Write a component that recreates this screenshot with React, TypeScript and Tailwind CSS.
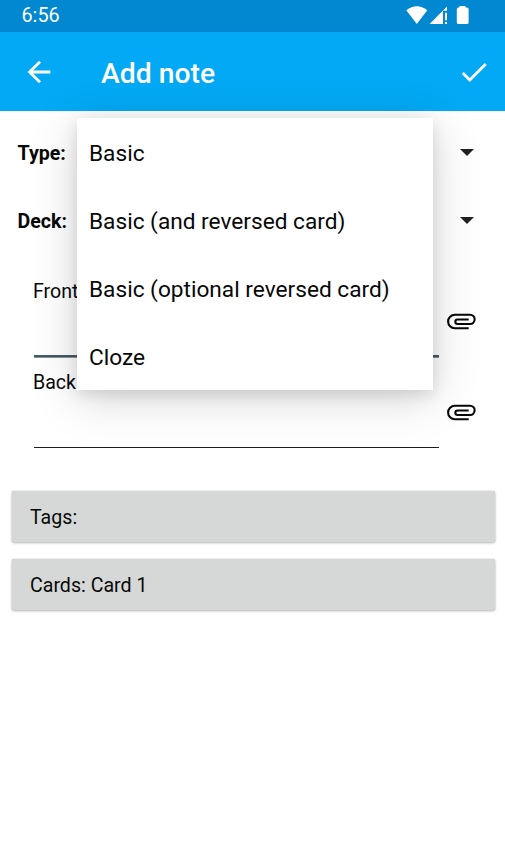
import React from "react";

const noteTypes = [
  "Basic",
  "Basic (and reversed card)",
  "Basic (optional reversed card)",
  "Cloze",
];

function StatusBar() {
  return (
    <div className="flex h-8 items-start justify-between bg-[#0288d1] pl-[21.5px] text-white">
      <span className="mt-[3.5px] text-[19.8px] leading-6">6:56</span>
      <svg className="h-8 w-[105px]" viewBox="400 0 105 32" fill="currentColor">
        <path d="M406.3 10.3Q416.8 2 427.3 10.3L416.8 23.9Z" />
        <path d="M429.6 24L447 6.4V10.8H443V24Z" />
        <path d="M445 12.7h2v7.6h-2zM445 22h2v2h-2z" />
        <path d="M459.4 6h6v1.6h1.600a1.600 1.600 0 0 1 1.600 1.600v13.200a1.600 1.600 0 0 1-1.600 1.600h-8.600a1.600 1.600 0 0 1-1.600-1.600V9.200a1.600 1.600 0 0 1 1.600-1.600h1z" />
      </svg>
    </div>
  );
}

function AppBar() {
  return (
    <header className="flex h-[79px] items-start bg-[#03a9f4] pl-[21.5px] pr-[14px] pt-[23px] text-white">
      <svg className="-mt-[0.5px] size-[34px]" viewBox="0 0 24 24" fill="currentColor">
        <path d="M20 11H7.830l5.590-5.590L12 4l-8 8 8 8 1.410-1.410L7.830 13H20v-2z" />
      </svg>
      <h1 className="ml-[45.500px] mt-px flex-1 text-[28.3px] font-medium leading-9">Add note</h1>
      <svg className="size-[34px]" viewBox="0 0 24 24" fill="currentColor">
        <path d="M9 16.170L4.830 12l-1.420 1.410L9 19 21 7l-1.410-1.410z" />
      </svg>
    </header>
  );
}

function Selector({ label }: { label: string }) {
  return (
    <div className="flex h-[68px] items-center justify-between pl-[17.5px] pr-[31px]">
      <span className="pt-[2px] text-[19.6px] font-bold">{label}</span>
      <svg className="mb-px h-[7px] w-[14px]" viewBox="0 0 14 7" fill="#212121">
        <path d="M0 0h14L7 7z" />
      </svg>
    </div>
  );
}

function Field({ label, focused }: { label: string; focused?: boolean }) {
  return (
    <div className="flex h-[91px] pl-[33px]">
      <div className="w-[406px]">
        <div className="text-[19.6px] leading-6">{label}</div>
        <div
          className={
            focused
              ? "ml-px mt-[51px] h-[3px] border-b border-[#84939a] bg-[#455a64]"
              : "ml-px mt-[52px] h-px bg-[#1c1c1c]"
          }
        />
      </div>
      <svg
        className="ml-[5px] mt-[24px] size-[34px]"
        viewBox="0 0 34 34"
        fill="none"
        stroke="currentColor"
        strokeWidth="2.1"
      >
        <path d="M24.700 24.300H10.900a6.800 6.800 0 0 1 0-13.600H26a4.650 4.650 0 0 1 0 9.300H13.600a2.250 2.250 0 0 1 0-4.500H24.700" />
      </svg>
    </div>
  );
}

function PanelButton({ children }: { children: React.ReactNode }) {
  return (
    <button className="flex h-[51px] items-center rounded-[2px] bg-[#d6d8d7] pl-[18px] pt-[2px] text-[19.6px] shadow-[0_0_1px_rgba(0,0,0,0.3),0_1px_3px_rgba(0,0,0,0.28)]">
      {children}
    </button>
  );
}

export default function App() {
  return (
    <div className="relative h-[867px] w-[505px] overflow-hidden bg-white font-['Roboto',sans-serif] text-[#080808]">
      <StatusBar />
      <AppBar />
      <main>
        <div className="pt-[8px]">
          <Selector label="Type:" />
          <Selector label="Deck:" />
        </div>
        <div className="pt-[25px]">
          <Field label="Front" focused />
          <Field label="Back" />
        </div>
        <div className="flex flex-col gap-[17px] pl-[12px] pr-[10px] pt-[29px]">
          <PanelButton>Tags:</PanelButton>
          <PanelButton>Cards: Card 1</PanelButton>
        </div>
      </main>
      <ul className="absolute left-[77px] top-[118px] w-[356px] bg-white text-[22.67px] shadow-[0_8px_44px_rgba(0,0,0,0.17),0_5px_14px_rgba(0,0,0,0.11)]">
        {noteTypes.map((name) => (
          <li key={name} className="flex h-[68px] items-center pl-[12px] pt-[4px]">
            {name}
          </li>
        ))}
      </ul>
    </div>
  );
}
